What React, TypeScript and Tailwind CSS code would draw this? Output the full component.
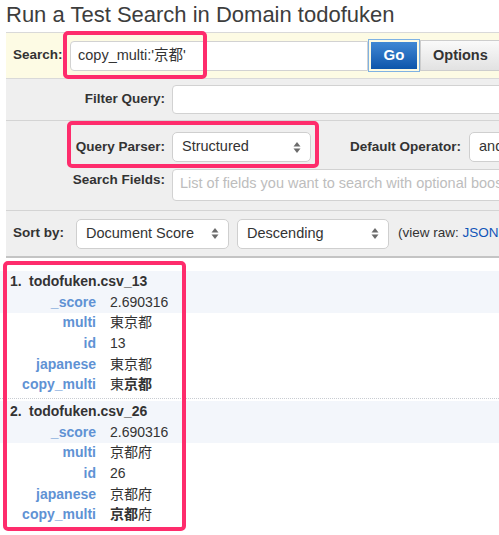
import React from 'react'

const font = { fontFamily: '"Liberation Sans", "Noto Sans CJK JP", Arial, sans-serif' }

function Arrows() {
  return (
    <svg width="8" height="13" viewBox="0 0 8 13" className="shrink-0">
      <path d="M4 1 L7.5 5.5 H0.5 Z" fill="#6b6b6b" />
      <path d="M4 12 L7.5 7.5 H0.5 Z" fill="#6b6b6b" />
    </svg>
  )
}

function Select({ value, w }: { value: string; w: string }) {
  return (
    <div
      className={`${w} h-[30px] shrink-0 flex items-center justify-between pl-[9px] pr-[9px] bg-white border border-[#cfcfcf] rounded-[5px] text-[14.5px] text-[#333]`}
    >
      <span className="whitespace-nowrap overflow-hidden">{value}</span>
      <Arrows />
    </div>
  )
}

type Field = { name: string; value: React.ReactNode }

function Hit({ n, id, fields, dotted }: { n: number; id: string; fields: Field[]; dotted?: boolean }) {
  return (
    <div className={dotted ? 'border-t border-dotted border-[#c8ccd2] pt-[2px]' : 'pb-[3px]'}>
      <div className="bg-[#f3f6fb]">
        <div className="h-[21px] flex items-center pl-[10px] text-[14px] font-bold text-[#333] whitespace-nowrap">
          <span className="w-[19px]">{n}.</span>
          <span>todofuken.csv_{id}</span>
        </div>
        <Row f={fields[0]} />
      </div>
      {fields.slice(1).map((f) => (
        <Row key={f.name} f={f} />
      ))}
    </div>
  )
}

function Row({ f }: { f: Field }) {
  return (
    <div className="h-[20.6px] flex items-center text-[14px] whitespace-nowrap">
      <span className="w-[96px] shrink-0 text-right font-bold text-[#5f92d4]">{f.name}</span>
      <span className="pl-[14px] text-[#333]">{f.value}</span>
    </div>
  )
}

const label = 'shrink-0 text-[13.5px] font-bold text-[#333] whitespace-nowrap'

export default function App() {
  return (
    <div className="relative w-[499px] h-[535px] overflow-hidden bg-white" style={font}>
      <h1 className="h-[32px] pl-[6px] pt-[3px] text-[22px] leading-[24px] text-[#3d3d3d] whitespace-nowrap">
        Run a Test Search in Domain todofuken
      </h1>

      <div className="ml-[6px]">
        {/* search bar */}
        <div className="h-[47px] flex items-center border-y border-[#d9d9d9] bg-[#fdfbe4]">
          <span className={`${label} pl-[7px] w-[64px]`}>Search:</span>
          <div className="w-[298px] h-[30px] shrink-0 flex items-center pl-[7px] bg-white border border-[#d2d2d2] rounded-l-[4px] text-[14.5px] text-[#333] whitespace-nowrap">
            copy_multi:'京都'
          </div>
          <div className="h-[33px] w-[52px] shrink-0 border border-[#7fb2e3] p-[2px]">
            <div className="h-full w-full flex items-center justify-center bg-gradient-to-b from-[#3f88d4] to-[#0c56ab] text-white text-[15px] font-bold">
              Go
            </div>
          </div>
          <div className="h-[31px] w-[90px] shrink-0 flex items-center pl-[12px] border border-[#cdcdcd] bg-gradient-to-b from-[#fafafa] to-[#e2e2e2] text-[14.5px] font-bold text-[#333]">
            Options
          </div>
        </div>

        {/* options panel */}
        <div className="bg-[#efefef] border-b-2 border-[#c4c4c4]">
          <div className="h-[42px] flex items-center border-b border-[#d4d4d4]">
            <span className={`${label} w-[159px] text-right`}>Filter Query:</span>
            <div className="ml-[7px] w-[340px] h-[29px] shrink-0 bg-white border border-[#d2d2d2] rounded-[4px]" />
          </div>

          <div className="pt-[11px] pb-[9px] border-b border-[#d4d4d4]">
            <div className="flex items-center">
              <span className={`${label} w-[159px] text-right`}>Query Parser:</span>
              <div className="ml-[7px]">
                <Select value="Structured" w="w-[139px]" />
              </div>
              <span className={`${label} ml-[39px]`}>Default Operator:</span>
              <div className="ml-[8px] w-[60px] h-[30px] shrink-0 flex items-center pl-[9px] bg-white border border-[#cfcfcf] rounded-[5px] text-[14.5px] text-[#333]">
                and
              </div>
            </div>
            <div className="flex items-start mt-[7px]">
              <span className={`${label} w-[159px] pt-[1px] text-right`}>Search Fields:</span>
              <div className="ml-[7px] w-[340px] h-[32px] shrink-0 pl-[7px] pt-[3px] bg-white border border-[#d2d2d2] rounded-[4px] text-[14.5px] text-[#bdbdbd] whitespace-nowrap overflow-hidden">
                List of fields you want to search with optional boost
              </div>
            </div>
          </div>

          <div className="h-[45px] flex items-center">
            <span className={`${label} pl-[7px] w-[70px]`}>Sort by:</span>
            <Select value="Document Score" w="w-[153px]" />
            <div className="ml-[8px]">
              <Select value="Descending" w="w-[152px]" />
            </div>
            <span className="ml-[9px] shrink-0 text-[13.5px] text-[#333] whitespace-nowrap">
              (view raw: <span className="text-[#1155b8]">JSON</span>
            </span>
          </div>
        </div>
      </div>

      {/* hits */}
      <div className="pt-[13px]">
        <Hit
          n={1}
          id="13"
          fields={[
            { name: '_score', value: '2.690316' },
            { name: 'multi', value: '東京都' },
            { name: 'id', value: '13' },
            { name: 'japanese', value: '東京都' },
            { name: 'copy_multi', value: <>東<b>京都</b></> },
          ]}
        />
        <Hit
          n={2}
          id="26"
          dotted
          fields={[
            { name: '_score', value: '2.690316' },
            { name: 'multi', value: '京都府' },
            { name: 'id', value: '26' },
            { name: 'japanese', value: '京都府' },
            { name: 'copy_multi', value: <><b>京都</b>府</> },
          ]}
        />
      </div>

      {/* highlight boxes */}
      <div className="absolute left-[63px] top-[31px] w-[144px] h-[48px] border-[4px] border-[#fe2c6c] rounded-[5px]" />
      <div className="absolute left-[67px] top-[121px] w-[252px] h-[47px] border-[4px] border-[#fe2c6c] rounded-[5px]" />
      <div className="absolute left-[3px] top-[261px] w-[183px] h-[270px] border-[4px] border-[#fe2c6c] rounded-[5px]" />
    </div>
  )
}
